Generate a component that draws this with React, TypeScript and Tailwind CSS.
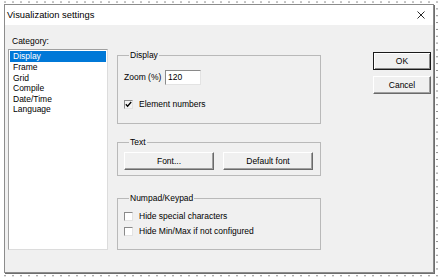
import React from "react";

const font = "font-['Liberation_Sans',Arial,sans-serif]";

const categories = ["Display", "Frame", "Grid", "Compile", "Date/Time", "Language"];

// classic 3D push button
const Button = ({ label, isDefault, className }: { label: string; isDefault?: boolean; className?: string }) => (
  <button
    className={
      "h-[18px] flex items-center justify-center text-[8.5px] leading-[11px] text-black bg-[#f0f0f0] " +
      (isDefault
        ? "border border-[#1a1a1a] shadow-[inset_1px_1px_#ffffff,inset_-1px_-1px_#8a8a8a] "
        : "border border-t-white border-l-white border-r-[#6a6a6a] border-b-[#6a6a6a] shadow-[inset_-1px_-1px_#a0a0a0] ") +
      (className ?? "")
    }
  >
    {label}
  </button>
);

const Checkbox = ({ checked, label, className }: { checked?: boolean; label: string; className?: string }) => (
  <div className={"flex items-center h-[11px] " + (className ?? "")}>
    <div
      className={
        "w-[9px] h-[9px] border border-t-[#8a8a8a] border-l-[#8a8a8a] border-r-[#e3e3e3] border-b-[#e3e3e3] flex items-center justify-center " +
        (checked ? "bg-[#f4f4f4]" : "bg-white")
      }
    >
      {checked && (
        <svg width="7" height="7" viewBox="0 0 7 7">
          <path d="M0.8 3.2 L2.6 5.2 L6.2 1" fill="none" stroke="#000" strokeWidth="1.3" />
        </svg>
      )}
    </div>
    <span className="ml-[6px] text-[8.5px] leading-[11px]">{label}</span>
  </div>
);

const Group = ({ title, className, children }: { title: string; className?: string; children: React.ReactNode }) => (
  <fieldset className={"border border-[#b9b9b9] px-[6px] " + (className ?? "")}>
    <legend className="ml-[5px] px-[1px] text-[8.5px] leading-[11px]">{title}</legend>
    {children}
  </fieldset>
);

export default function App() {
  return (
    <div
      className={
        "w-[439px] h-[279px] bg-white pt-[4px] pl-[4px] text-black " +
        "bg-[radial-gradient(circle,#8c8c8c_0.9px,transparent_1.1px)] bg-[length:8px_6.85px] bg-[position:1px_-1.4px] " +
        font
      }
    >
      <div className="w-[430px] h-[269px] border border-[#8c8c8c] bg-[#f0f0f0] flex flex-col shadow-[1px_1px_0_#6e6e6e]">
        {/* Title bar */}
        <div className="h-[20px] bg-white flex items-center justify-between pl-[2px] pr-[8px]">
          <span className="text-[9.4px] leading-[12px]">Visualization settings</span>
          <svg width="8" height="8" viewBox="0 0 8 8">
            <path d="M0.5 0.5 L7.5 7.5 M7.5 0.5 L0.5 7.5" stroke="#111" strokeWidth="0.9" />
          </svg>
        </div>

        {/* Body */}
        <div className="flex-1 flex flex-row pl-[3px]">
          {/* Category list */}
          <div className="w-[100px] pt-[11px] flex flex-col">
            <span className="ml-[4px] text-[8.5px] leading-[11px]">Category:</span>
            <div className="mt-[2px] h-[201px] bg-white border border-t-[#a0a0a0] border-l-[#a0a0a0] border-r-[#dcdcdc] border-b-[#dcdcdc] p-[1px]">
              {categories.map((c, i) => (
                <div
                  key={c}
                  className={
                    "pl-[3px] text-[8.5px] " +
                    (i === 0 ? "h-[11px] leading-[11px] bg-[#0078d7] text-white" : "h-[10.6px] leading-[10.6px]")
                  }
                >
                  {c}
                </div>
              ))}
            </div>
          </div>

          {/* Settings groups */}
          <div className="ml-[9px] w-[204px] pt-[24.5px] flex flex-col">
            <Group title="Display" className="pb-[13px]">
              <div className="mt-[9.5px] flex items-center">
                <span className="w-[41px] text-[8.5px] leading-[11px]">Zoom (%)</span>
                <div className="w-[36px] h-[15px] bg-white border border-t-[#8a8a8a] border-l-[#8a8a8a] border-r-[#e3e3e3] border-b-[#e3e3e3] flex items-center pl-[2px] text-[8.5px]">
                  120
                </div>
              </div>
              <Checkbox checked label="Element numbers" className="mt-[14px]" />
            </Group>

            <Group title="Text" className="mt-[12.5px] pb-[5px]">
              <div className="mt-[4.5px] flex gap-[9px]">
                <Button label="Font..." className="w-[90px]" />
                <Button label="Default font" className="w-[90px]" />
              </div>
            </Group>

            <Group title="Numpad/Keypad" className="mt-[16.5px] pb-[12px]">
              <Checkbox label="Hide special characters" className="mt-[7.5px]" />
              <Checkbox label="Hide Min/Max if not configured" className="mt-[4px]" />
            </Group>
          </div>

          {/* Dialog buttons */}
          <div className="ml-auto mr-[2px] w-[58px] pt-[27px] flex flex-col">
            <Button label="OK" isDefault />
            <Button label="Cancel" className="mt-[6px]" />
          </div>
        </div>
      </div>
    </div>
  );
}
